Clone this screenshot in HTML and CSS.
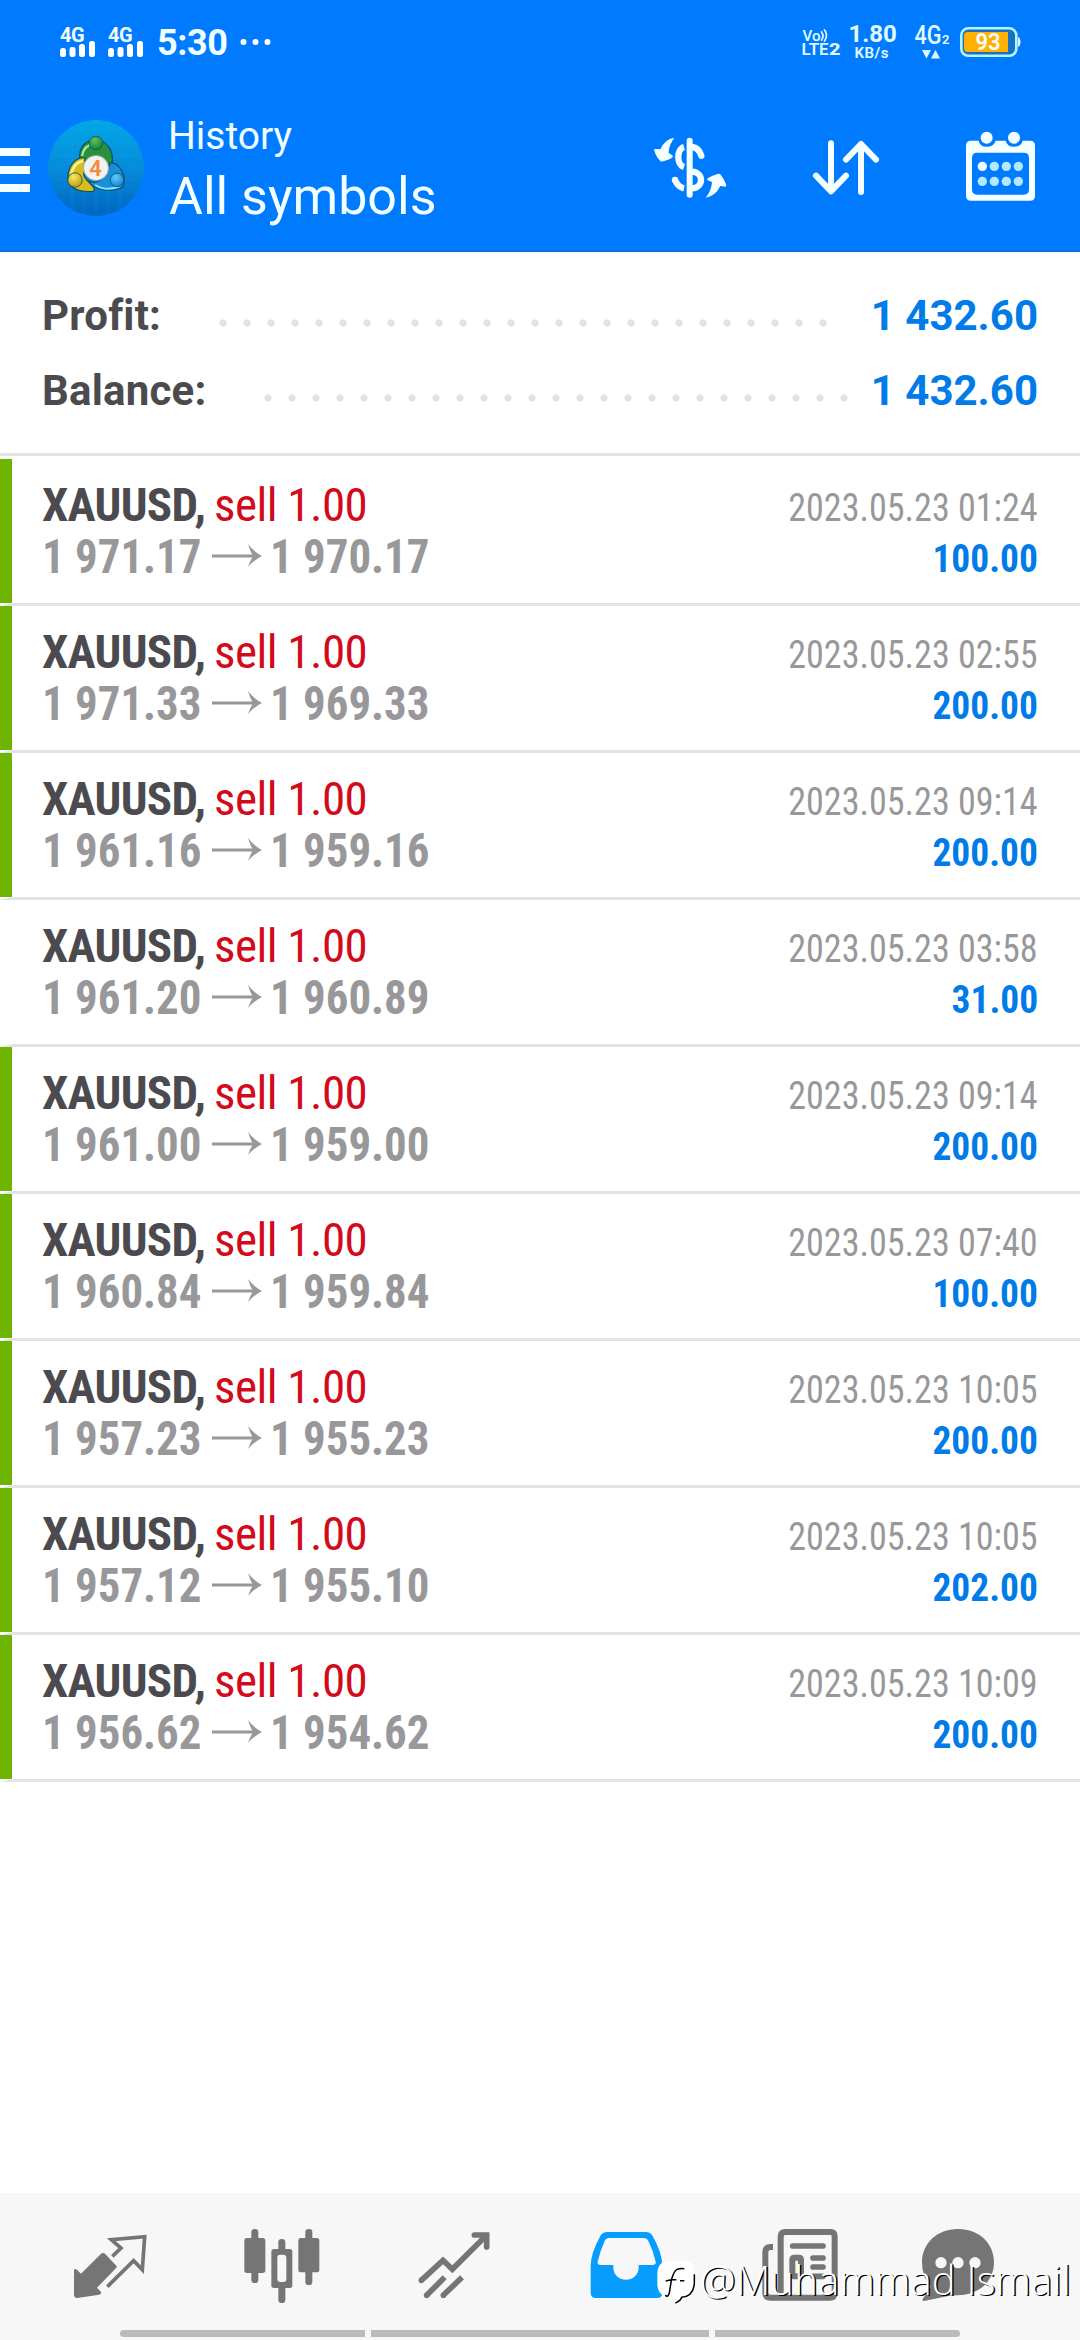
FILE: index.html
```html
<!DOCTYPE html>
<html lang="en">
<head>
<meta charset="utf-8">
<title>History</title>
<link rel="stylesheet" href="styles.css">
</head>
<body>
<svg class="defs" aria-hidden="true">
  <symbol id="arrow" viewBox="0 0 50 24"><path d="M0 12H44" stroke="currentColor" stroke-width="3" fill="none"/><path d="M50 12Q42 8 36 0Q38 7 41 12Q38 17 36 23Q42 16 50 12Z" fill="currentColor"/></symbol>
  <symbol id="bars" viewBox="0 0 36 16"><rect x="0" y="7" width="6" height="9" rx="2.5"/><rect x="9.500" y="6" width="6" height="10" rx="2.5"/><rect x="19" y="3" width="6" height="13" rx="2.5"/><rect x="29" y="0" width="6" height="16" rx="2.5"/></symbol>
</svg>
<div class="app">
  <header class="top">
    <div class="status">
      <div class="status-left">
        <div class="signal"><span class="net">4G</span><svg class="bars"><use href="#bars"/></svg></div>
        <div class="signal"><span class="net">4G</span><svg class="bars"><use href="#bars"/></svg></div>
        <span class="clock">5:30</span>
        <svg class="dots" viewBox="0 0 31 8"><g fill="#fff"><circle cx="3.5" cy="4" r="3"/><circle cx="15.5" cy="4" r="3"/><circle cx="27.5" cy="4" r="3"/></g></svg>
      </div>
      <svg class="status-right" viewBox="800 20 224 44" fill="#e2fbff">
        <text x="802.500" y="41" font-size="15.500" font-weight="500" textLength="18" lengthAdjust="spacingAndGlyphs">Vo</text>
        <g fill="none" stroke="#e2fbff" stroke-width="1.8" stroke-linecap="round"><path d="M821.500 32q3 4 0 8"/><path d="M824.500 30q4 5 0 11"/></g>
        <text x="801.500" y="55" font-size="16" font-weight="600" textLength="27" lengthAdjust="spacingAndGlyphs">LTE</text>
        <text x="829" y="55" font-size="17" font-weight="800" textLength="11.500" lengthAdjust="spacingAndGlyphs">2</text>
        <text x="848.500" y="42" font-size="24" font-weight="700">1.80</text>
        <text x="854.500" y="58" font-size="15" font-weight="600" textLength="34">KB/s</text>
        <text x="914.500" y="44" font-size="25" font-weight="500" textLength="27" lengthAdjust="spacingAndGlyphs">4G</text>
        <text x="942" y="44" font-size="13" font-weight="600">2</text>
        <path d="M922 50h9l-4.500 8.500zM931 58.500h9l-4.500-8.500z"/>
        <rect x="961.300" y="28.300" width="55" height="27.500" rx="7" fill="#1672c4" stroke="#b5f3ff" stroke-width="2.600"/>
        <path d="M968 32h40v20h-40a4 4 0 0 1-4-4v-12a4 4 0 0 1 4-4z" fill="#ffb000"/>
        <path d="M1018 37q2.500 1 2.500 5t-2.500 5z"/>
        <text x="975.500" y="50" font-size="23" font-weight="600" textLength="25" lengthAdjust="spacingAndGlyphs" fill="#fff">93</text>
      </svg>
    </div>
    <div class="toolbar">
      <span class="burger"></span>
      <svg class="logo" viewBox="0 0 96 96">
        <defs>
          <linearGradient id="disc" x1="0" y1="0" x2="0" y2="1"><stop offset="0" stop-color="#00a9e8"/><stop offset=".55" stop-color="#0787d8"/><stop offset="1" stop-color="#0066bf"/></linearGradient>
          <radialGradient id="green" cx=".4" cy=".3" r=".8"><stop offset="0" stop-color="#65bd62"/><stop offset="1" stop-color="#087c2b"/></radialGradient>
          <radialGradient id="gold" cx=".4" cy=".3" r=".8"><stop offset="0" stop-color="#fbe963"/><stop offset="1" stop-color="#b99404"/></radialGradient>
          <radialGradient id="blue" cx=".4" cy=".3" r=".8"><stop offset="0" stop-color="#61cdfa"/><stop offset="1" stop-color="#0878cf"/></radialGradient>
        </defs>
        <circle cx="48" cy="48" r="48" fill="url(#disc)"/>
        <path d="M24 7V89M36 2V94M48 0V96M60 2V94M72 7V89M7 24H89M2 36H94M0 48H96M2 60H94M7 72H89" stroke="#38b7ed" stroke-opacity=".16" fill="none"/>
        <g stroke="#0a5068" stroke-width="1.200">
          <path d="M32 42C29 24 41 20 48 20C57 20 67 29 64 46C58 49 57 36 48 36C41 36 39 44 32 42Z" fill="#28913b"/>
          <path d="M37 38C31 36 21 43 20 56C19 69 32 73 46 71C49 65 31 59 37 50Z" fill="#d7bd19"/>
          <path d="M62 43C72 42 79 57 75 67C64 73 47 71 40 61C49 65 58 60 62 43Z" fill="#178fda"/>
        </g>
        <path d="M34 36Q36 25 47 23" stroke="#b4edaa" stroke-width="2" fill="none"/><path d="M23 58Q24 43 35 41" stroke="#fff291" stroke-width="2.500" fill="none"/><path d="M47 65Q59 72 72 66" stroke="#8ce0ff" stroke-width="2" fill="none"/>
        <g stroke="#0a5068" stroke-width=".8"><circle cx="48" cy="23" r="6.800" fill="url(#green)"/><circle cx="27" cy="60" r="7.200" fill="url(#gold)"/><circle cx="69" cy="60" r="6.800" fill="url(#blue)"/></g>
        <circle cx="48" cy="48" r="12.500" fill="#f2f2f3" stroke="#a7afa8" stroke-width="1"/>
        <text x="47.500" y="56" text-anchor="middle" font-size="22" font-weight="600" fill="#f58a3c">4</text>
      </svg>
      <div class="titles">
        <span class="title-small">History</span>
        <span class="title-large">All symbols</span>
      </div>
      <div class="actions">
        <!-- deposit / exchange -->
        <svg class="act" viewBox="90 85 240 240">
          <path d="M209 123V285" stroke="#f4ffff" stroke-width="18" stroke-linecap="round" fill="none"/>
          <g stroke="#f4ffff" stroke-width="19" fill="none"><path d="M192 142C169 149 169 195 192 202"/><path d="M216 142Q236 144 244 168" stroke-linecap="round"/><path d="M216 216C252 218 252 264 216 266"/><path d="M192 266Q174 262 165 241"/></g>
          <circle cx="165" cy="241" r="9.500" fill="#f4ffff"/>
          <path d="M163 114Q134 118 121 149L104 148Q101 150 103 154Q110 174 121 184Q124 187 129 185Q148 181 158 172Q160 169 157 167L146 160Q146 136 163 114Z" fill="#f4ffff"/>
          <path d="M257 294Q286 290 301 259L316 261Q320 259 318 254Q311 236 301 224Q298 221 293 223Q274 228 263 236Q260 240 263 242L276 247Q275 272 257 294Z" fill="#f4ffff"/>
        </svg>
        <!-- sort -->
        <svg class="act" viewBox="555 85 240 240" fill="none" stroke="#f4ffff" stroke-width="18" stroke-linecap="round" stroke-linejoin="round"><path d="M633 131V275M588 228L633 275L678 228M723 277V133M678 180L723 133L768 180"/></svg>
        <!-- calendar -->
        <svg class="act" viewBox="1020 85 240 240">
          <path fill-rule="evenodd" fill="#f4ffff" d="M1053 123H1076Q1079 141 1100 141Q1122 141 1127 123H1157Q1161 141 1182 141Q1204 141 1208 123H1230Q1245 123 1245 138V288Q1245 303 1230 303H1053Q1038 303 1038 288V138Q1038 123 1053 123ZM1072 159Q1056 159 1056 175V269Q1056 285 1072 285H1211Q1227 285 1227 269V175Q1227 159 1211 159Z"/>
          <g fill="#f4ffff"><circle cx="1100" cy="114" r="18"/><circle cx="1182" cy="114" r="18"/><circle cx="1087" cy="200" r="14"/></g>
          <g fill="#b3e8ff"><circle cx="1123" cy="200" r="14"/><circle cx="1159" cy="200" r="14"/><circle cx="1195" cy="200" r="14"/><circle cx="1087" cy="245" r="14"/><circle cx="1123" cy="245" r="14"/><circle cx="1159" cy="245" r="14"/><circle cx="1195" cy="245" r="14"/></g>
        </svg>
      </div>
    </div>
  </header>

  <section class="summary">
    <div class="sum-row"><span class="sum-label">Profit:</span><span class="leader leader-profit"></span><span class="sum-value">1 432.60</span></div>
    <div class="sum-row"><span class="sum-label">Balance:</span><span class="leader leader-balance"></span><span class="sum-value">1 432.60</span></div>
  </section>

  <main class="deals">
    <article class="deal tp">
      <div class="deal-head"><b class="symbol">XAUUSD,</b><span class="side">sell 1.00</span></div><time class="date">2023.05.23 01:24</time>
      <div class="prices"><span class="price">1 971.17</span><svg class="arrow"><use href="#arrow"/></svg><span class="price">1 970.17</span></div><span class="profit">100.00</span>
    </article>
    <article class="deal tp">
      <div class="deal-head"><b class="symbol">XAUUSD,</b><span class="side">sell 1.00</span></div><time class="date">2023.05.23 02:55</time>
      <div class="prices"><span class="price">1 971.33</span><svg class="arrow"><use href="#arrow"/></svg><span class="price">1 969.33</span></div><span class="profit">200.00</span>
    </article>
    <article class="deal tp">
      <div class="deal-head"><b class="symbol">XAUUSD,</b><span class="side">sell 1.00</span></div><time class="date">2023.05.23 09:14</time>
      <div class="prices"><span class="price">1 961.16</span><svg class="arrow"><use href="#arrow"/></svg><span class="price">1 959.16</span></div><span class="profit">200.00</span>
    </article>
    <article class="deal">
      <div class="deal-head"><b class="symbol">XAUUSD,</b><span class="side">sell 1.00</span></div><time class="date">2023.05.23 03:58</time>
      <div class="prices"><span class="price">1 961.20</span><svg class="arrow"><use href="#arrow"/></svg><span class="price">1 960.89</span></div><span class="profit">31.00</span>
    </article>
    <article class="deal tp">
      <div class="deal-head"><b class="symbol">XAUUSD,</b><span class="side">sell 1.00</span></div><time class="date">2023.05.23 09:14</time>
      <div class="prices"><span class="price">1 961.00</span><svg class="arrow"><use href="#arrow"/></svg><span class="price">1 959.00</span></div><span class="profit">200.00</span>
    </article>
    <article class="deal tp">
      <div class="deal-head"><b class="symbol">XAUUSD,</b><span class="side">sell 1.00</span></div><time class="date">2023.05.23 07:40</time>
      <div class="prices"><span class="price">1 960.84</span><svg class="arrow"><use href="#arrow"/></svg><span class="price">1 959.84</span></div><span class="profit">100.00</span>
    </article>
    <article class="deal tp">
      <div class="deal-head"><b class="symbol">XAUUSD,</b><span class="side">sell 1.00</span></div><time class="date">2023.05.23 10:05</time>
      <div class="prices"><span class="price">1 957.23</span><svg class="arrow"><use href="#arrow"/></svg><span class="price">1 955.23</span></div><span class="profit">200.00</span>
    </article>
    <article class="deal tp">
      <div class="deal-head"><b class="symbol">XAUUSD,</b><span class="side">sell 1.00</span></div><time class="date">2023.05.23 10:05</time>
      <div class="prices"><span class="price">1 957.12</span><svg class="arrow"><use href="#arrow"/></svg><span class="price">1 955.10</span></div><span class="profit">202.00</span>
    </article>
    <article class="deal tp">
      <div class="deal-head"><b class="symbol">XAUUSD,</b><span class="side">sell 1.00</span></div><time class="date">2023.05.23 10:09</time>
      <div class="prices"><span class="price">1 956.62</span><svg class="arrow"><use href="#arrow"/></svg><span class="price">1 954.62</span></div><span class="profit">200.00</span>
    </article>
  </main>

  <nav class="tabs">
    <div class="tab-icons">
      <!-- quotes -->
      <svg class="tab" viewBox="72 120 516 270">
        <path d="M305 220Q310 217 315 221L349 257Q352 260 349 263L291 323L303 336Q305 343 297 344L232 354Q222 354 222 345V270Q224 265 229 268L243 281Z" fill="#757575"/>
        <path d="M337 229L363 204L334 179L434 170L427 269L401 242L322 320" fill="none" stroke="#757575" stroke-width="11"/>
      </svg>
      <!-- charts -->
      <svg class="tab" viewBox="587 120 516 270" fill="#757575">
        <rect x="753" y="147" width="21" height="162" rx="10"/><rect x="732" y="174" width="63" height="105" rx="8"/>
        <rect x="834" y="177" width="21" height="192" rx="10"/><rect x="813" y="207" width="63" height="117" rx="8"/><rect x="831" y="224" width="27" height="82" rx="9" fill="#f7f7f7"/>
        <rect x="915" y="147" width="21" height="168" rx="10"/><rect x="894" y="174" width="63" height="103" rx="8"/>
      </svg>
      <!-- trade -->
      <svg class="tab" viewBox="22 120 516 270" fill="none" stroke="#757575" stroke-width="17" stroke-linejoin="miter">
        <path d="M182 301L247 241L275 268L376 167"/><path d="M341 165H378V201" stroke-linecap="round"/><path d="M198 346L252 292M248 346L304 292"/>
        <g fill="#757575" stroke="none"><circle cx="182" cy="301" r="8.500"/><circle cx="198" cy="346" r="8.500"/><circle cx="248" cy="346" r="8.500"/></g>
      </svg>
      <!-- history -->
      <svg class="tab" viewBox="540 120 516 270">
        <path fill-rule="evenodd" fill="#079dff" d="M742 156H858Q871 156 878 168Q907 220 907 258V338Q907 354 891 354H708Q692 354 692 338V258Q692 220 721 168Q728 156 742 156ZM748 174Q738 174 734 183Q720 214 713 245Q711 255 722 255H760V262C760 312 836 312 836 262V255H878Q889 255 887 245Q880 213 865 183Q861 174 851 174Z"/>
      </svg>
      <!-- news -->
      <svg class="tab" viewBox="216 120 516 270">
        <path d="M399 201H392Q376 201 376 217V338Q376 353 392 353H569Q584 353 584 338V169Q584 156 571 156H436Q422 156 422 170V344" fill="none" stroke="#757575" stroke-width="18"/>
        <path d="M458 198H549M519 234H549M519 261H549M519 289H549" fill="none" stroke="#757575" stroke-width="17" stroke-linecap="round"/><rect x="457" y="233" width="26" height="56" rx="5" fill="none" stroke="#757575" stroke-width="18"/>
      </svg>
      <!-- messages -->
      <svg class="tab" viewBox="732 120 516 270">
        <path d="M954 147C1018 147 1062 191 1062 246C1062 304 1018 344 954 346Q930 346 914 350L852 363Q844 363 850 354Q865 336 872 319Q846 292 846 246C846 191 891 147 954 147Z" fill="#757575"/>
        <g fill="#f7f7f7"><circle cx="903" cy="248" r="17"/><circle cx="954" cy="248" r="17"/><circle cx="1005" cy="248" r="17"/></g>
      </svg>
    </div>
    <div class="gesture"><i class="pill first"></i><i class="pill middle"></i><i class="pill last"></i></div>
  </nav>

  <div class="watermark">
    <svg class="mark" viewBox="20 92 118 132">
      <path d="M55 96H104C126 96 134 109 134 130V160C134 188 124 201 99 205Q92 221 77 221Q80 213 77 205C44 206 26 196 23 167V132C25 107 36 96 55 96Z" fill="#fff"/>
      <path d="M104 118C76 113 73 129 65 151L48 155M65 151H80M91 154H104M65 153L59 191Q54 207 47 197M134 135V162C132 190 119 202 96 204Q92 216 77 221" fill="none" stroke="#000" stroke-width="4.500"/>
    </svg>
    <span class="author">@Muhammad Ismail</span>
  </div>
</div>
</body>
</html>
```
FILE: styles.css
```css
* { box-sizing: border-box; }
body { margin: 0; background: #fff; font-family: Roboto, "Liberation Sans", sans-serif; }
svg { display: block; }
.defs { position: absolute; width: 0; height: 0; }

.app { position: relative; width: 1080px; height: 2340px; display: flex; flex-direction: column; overflow: hidden; }

/* header */
.top { height: 252px; background: #007bff; border-bottom: 2px solid #0a70e0; color: #f2ffff; flex: none; }
.status { height: 84px; padding: 20px 56px 0 60px; display: flex; justify-content: space-between; align-items: flex-start; }
.status-left { display: flex; align-items: flex-start; }
.signal { width: 36px; margin: 3px 12px 0 0; display: flex; flex-direction: column; }
.net { font-size: 20px; line-height: 24px; height: 18px; font-weight: 700; letter-spacing: -.5px; }
.bars { width: 36px; height: 16px; fill: #fff; }
.clock { font-size: 36px; line-height: 44px; font-weight: 700; width: 84px; padding-left: 1px; margin-top: 1px; letter-spacing: -.4px; }
.dots { width: 31px; height: 8px; margin-top: 18px; }
.status-right { width: 224px; height: 44px; }

.toolbar { height: 168px; display: flex; align-items: flex-start; }
.burger { width: 30px; height: 44px; margin-top: 64px; background: repeating-linear-gradient(#f4ffff 0 8px, transparent 8px 18px); }
.logo { width: 96px; height: 96px; margin: 36px 0 0 18px; }
.titles { display: flex; flex-direction: column; margin: 29px 0 0 24px; width: 482px; }
.title-small { font-size: 39px; line-height: 46px; }
.title-large { font-size: 52px; line-height: 62px; margin-top: 7px; padding-left: 1px; }
.actions { display: flex; gap: 75px; margin-top: 44px; }
.act { width: 80px; height: 80px; }

/* totals */
.summary { height: 204px; padding: 26px 42px 0; border-bottom: 3px solid #e3e3e5; flex: none; }
.sum-row { height: 75px; display: flex; justify-content: space-between; align-items: center; font-size: 42px; line-height: 75px; font-weight: 700; white-space: nowrap; }
.sum-label { color: #4b4b4f; flex: none; letter-spacing: .2px; }
.sum-value { color: #007be8; flex: none; width: 166px; display: flex; justify-content: flex-end; }
.leader { height: 8px; margin-top: 15px; background: radial-gradient(circle at 4px 4px, #e2e2e5 3.3px, transparent 3.9px) 0 0 / 24px 8px repeat-x; }
.leader-profit { width: 608px; margin-left: auto; margin-right: 45px; }
.leader-balance { width: 584px; margin-left: auto; margin-right: 24px; }

/* deals */
.deals { flex: 1; padding-top: 3px; }
.deal { height: 147px; padding: 20px 42px 0 30px; border-left: 12px solid transparent; border-bottom: 3px solid #e3e3e5; display: grid; grid-template-columns: 1fr auto; grid-template-rows: 51px 51px; font-family: "Roboto Condensed", Roboto, sans-serif; line-height: 51px; white-space: nowrap; }
.deal.tp { background: linear-gradient(#6eb400, #6eb400) 0 0 / 12px 144px no-repeat border-box; }
.deal-head { font-size: 47px; display: flex; }
.symbol { width: 172px; color: #4b4b4f; letter-spacing: -.7px; }
.side { color: #d20a1a; letter-spacing: -.5px; }
.date, .profit { font-size: 39px; justify-self: end; transform-origin: right center; padding-top: 4px; }
.date { color: #98989a; transform: scaleX(.925); }
.profit { color: #007be8; font-weight: 700; transform: scaleX(.96); }
.prices { display: flex; color: #98989a; font-size: 48px; font-weight: 700; padding-top: 1px; }
.price { width: 159px; transform: scaleX(.935); transform-origin: left center; }
.arrow { width: 50px; height: 24px; margin: 13px 8px 0 11px; }

/* bottom navigation */
.tabs { height: 147px; background: #f7f7f7; flex: none; display: flex; flex-direction: column; }
.tab-icons { padding: 27px 24px 0; height: 137px; display: flex; }
.tab { width: 172px; height: 90px; flex: none; }
.gesture { display: flex; gap: 6px; padding-left: 120px; height: 7px; }
.pill { height: 7px; background: #bababa; }
.first { width: 245px; border-radius: 4px 0 0 4px; }
.middle { width: 338px; }
.last { width: 245px; border-radius: 0 4px 4px 0; }

/* author watermark laid over the navigation */
.watermark { position: absolute; left: 656px; top: 2250px; display: flex; color: #fff; font: 300 40px/60px "Open Sans", sans-serif; letter-spacing: .2px; white-space: nowrap; text-shadow: 1.5px 1px 0 #000; }
.mark { width: 40px; height: 44px; margin: 10px 4px 0 0; }
```
